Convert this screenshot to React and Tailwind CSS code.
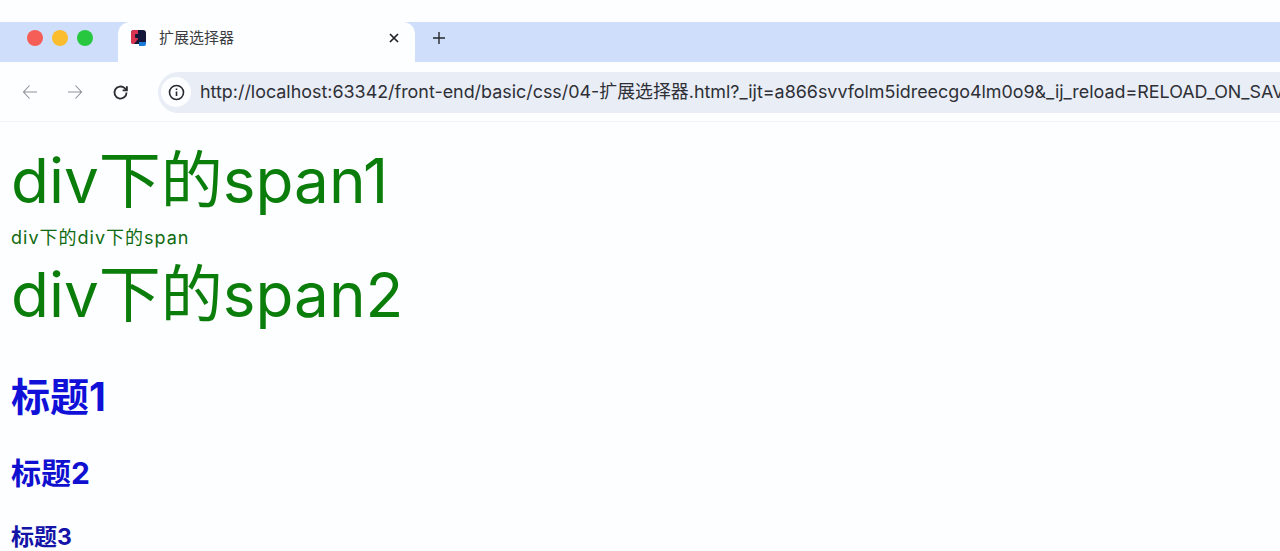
const sans = "font-['Inter','Noto_Sans_CJK_SC',sans-serif]";

function Dot({ className }) {
  return <span className={`w-4 h-4 rounded-full ${className}`} />;
}

function TabBar() {
  return (
    <div className="h-10 mt-[22px] bg-[#cfdffb] flex items-stretch">
      <div className="w-[118px] flex items-center gap-[9px] pl-[27px] pb-[8px] bg-[#cfdffb] rounded-br-xl">
        <Dot className="bg-[#f55e57]" />
        <Dot className="bg-[#fbbd2e]" />
        <Dot className="bg-[#27c840]" />
      </div>
      <div className="w-[297px] bg-[#fdfeff] rounded-t-xl flex items-center pl-[12px] pr-[15px] pb-[8px]">
        <svg width="18" height="18" viewBox="0 0 18 18" className="shrink-0">
          <rect x="1" y="1" width="15" height="14" rx="3" fill="#15173a" />
          <path d="M1 4a3 3 0 0 1 3-3h4v9l-4 5H3a2 2 0 0 1-2-2z" fill="#d8344f" />
          <path d="M9 13h7v2a2 2 0 0 1-2 2H9z" fill="#1a7bd8" />
          <rect x="5" y="5" width="6" height="4" rx="1" fill="#15173a" />
        </svg>
        <span className={`ml-[11px] text-[15px] text-[#3b3d42] ${sans}`}>扩展选择器</span>
        <svg width="12" height="12" viewBox="0 0 12 12" className="ml-auto" fill="none" stroke="#202124" strokeWidth="1.7">
          <path d="M2 2l8 8M10 2l-8 8" />
        </svg>
      </div>
      <div className="w-[48px] flex items-center justify-center pb-[8px]">
        <svg width="14" height="14" viewBox="0 0 14 14" fill="none" stroke="#26282c" strokeWidth="1.4">
          <path d="M7 1v12M1 7h12" />
        </svg>
      </div>
    </div>
  );
}

function Toolbar() {
  return (
    <div className="h-[60px] flex items-center pl-[22px] pt-[1px] border-b border-[#f1f3f6] overflow-hidden">
      <svg width="16" height="16" viewBox="0 0 16 16" fill="none" stroke="#8d9097" strokeWidth="1.1">
        <path d="M15 8H1.5M7.5 1.5 1.5 8l6 6.5" />
      </svg>
      <svg width="16" height="16" viewBox="0 0 16 16" className="ml-[29px]" fill="none" stroke="#8d9097" strokeWidth="1.1">
        <path d="M1 8h13.5M8.5 1.5l6 6.5-6 6.5" />
      </svg>
      <svg width="17" height="17" viewBox="0 0 24 24" className="ml-[29px]" fill="none" stroke="#2b2d31" strokeWidth="2.6">
        <path d="M20.5 12a8.5 8.5 0 1 1-2.6-6.1L21 9" />
        <path d="M21 3v6h-6" />
      </svg>
      <div className="ml-[29px] h-[41px] flex-1 min-w-0 bg-[#e9edf6] rounded-l-full flex items-center pl-[3px]">
        <div className="w-[30px] h-[30px] rounded-full bg-[#fdfeff] flex items-center justify-center shrink-0">
          <svg width="17" height="17" viewBox="0 0 17 17" fill="none" stroke="#26282c" strokeWidth="1.6">
            <circle cx="8.5" cy="8.5" r="7" />
            <path d="M8.5 7.5v4.5M8.5 4.5v1.6" />
          </svg>
        </div>
        <span className={`ml-[9px] text-[17.9px] leading-none whitespace-nowrap text-[#2e3036] ${sans}`}>
          http://localhost:63342/front-end/basic/css/04-扩展选择器.html?_ijt=a866svvfolm5idreecgo4lm0o9&_ij_reload=RELOAD_ON_SAVE
        </span>
      </div>
    </div>
  );
}

function Content() {
  return (
    <div className={`pl-[11px] ${sans}`}>
      <div className="text-[62px] leading-[74px] text-[#0b7d0b] pt-[22px]">div下的span1</div>
      <div className="text-[18px] leading-[20px] tracking-[1px] mt-[10px] text-[#0f6a0f]">div下的div下的span</div>
      <div className="text-[62px] leading-[74px] text-[#0b7d0b] mt-[10px]">div下的span2</div>
      <h1 className="text-[39px] leading-[44px] font-bold text-[#1010d8] mt-[43px]">标题1</h1>
      <h2 className="text-[30px] leading-[36px] font-bold text-[#1010d0] mt-[36px]">标题2</h2>
      <h3 className="text-[23px] leading-[28px] font-bold text-[#1414a8] mt-[32px]">标题3</h3>
    </div>
  );
}

export default function App() {
  return (
    <div className="w-[1280px] h-[551px] overflow-hidden bg-[#fcfeff]">
      <TabBar />
      <Toolbar />
      <Content />
    </div>
  );
}
